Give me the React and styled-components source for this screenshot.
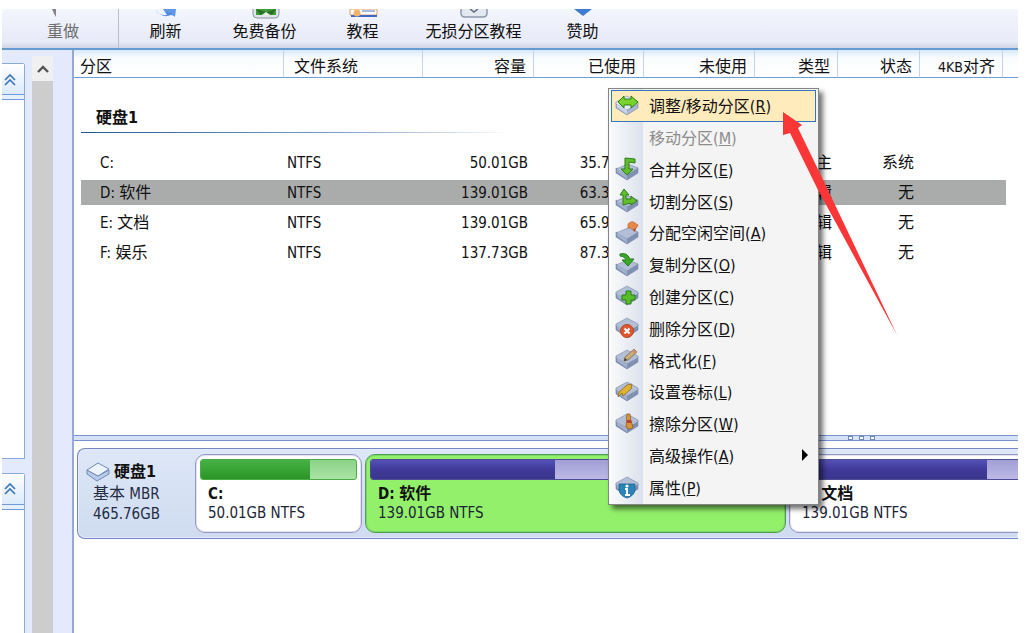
import React from "react";
import styled, { createGlobalStyle, css } from "styled-components";

const GlobalStyle = createGlobalStyle`
  *, *::before, *::after { box-sizing: border-box; }
  body {
    margin: 0;
    background: #fff;
    color: #111;
    font: 16px/20px "DejaVu Sans Condensed", "Noto Sans CJK SC", sans-serif;
  }
  button { font: inherit; color: inherit; border: 0; background: none; padding: 0; margin: 0; }
`;

const Window = styled.div`
  position: relative;
  display: flex;
  flex-direction: column;
  min-height: 100vh;
  padding: 9px 18px 0 2px;
  overflow: hidden;
`;

const Toolbar = styled.header`
  display: flex;
  height: 41px;
  padding-left: 6px;
  background: linear-gradient(#f4f6fd, #e7eaf7 85%, #cfd5e4);
  border-bottom: 2px solid #659bd3;
`;

const ToolButton = styled.button`
  display: flex;
  flex-direction: column;
  align-items: center;
  flex: none;
  gap: 3px;
  width: ${(p) => p.$width}px;
  white-space: nowrap;
  color: ${(p) => (p.disabled ? "#6d6d6d" : "#111")};
  ${(p) => p.$divided && css`
    border-right: 1px solid #b9bdcc;
  `}
`;

const ToolIcon = styled.svg`
  display: block;
  width: 30px;
  height: 10px;
`;

const Body = styled.div`
  display: flex;
  flex: 1;
`;

const Sidebar = styled.aside`
  display: flex;
  flex-direction: column;
  gap: 14px;
  width: 30px;
  padding: 13px 7px 0 0;
  background: #e2eafb;
`;

const SidePanel = styled.section`
  display: flex;
  flex-direction: column;
  flex: ${(p) => p.$share} 1 0;
  border: 1px solid #8aa9dc;
  border-left: 0;
  border-bottom-width: ${(p) => (p.$last ? 0 : 1)}px;
  border-top-right-radius: 3px;
  background: #fff;
`;

const PanelToggle = styled.button`
  display: flex;
  align-items: center;
  height: 36px;
  padding: 0 0 4px 1px;
  border-bottom: 1px solid #6f9ad8;
  background: linear-gradient(#fff, #dbeafa 30px, #6f9ad8 30px, #6f9ad8 31px, #e6f0fc 31px);
`;

const ScrollBar = styled.div`
  display: flex;
  flex-direction: column;
  width: 21px;
  padding-top: 6px;
  background: linear-gradient(#e2eafb 6px, #f0f0f0 6px);
`;

const ScrollUp = styled.button`
  display: grid;
  place-items: center;
  height: 25px;
`;

const ScrollThumb = styled.div`
  flex: 1;
  background: #cdcdcd;
`;

const Gutter = styled.div`
  width: 21px;
  background: #e4e9fd;
  border-right: 2px solid #96a9d6;
`;

const Main = styled.main`
  display: flex;
  flex-direction: column;
  flex: 1;
  min-width: 0;
`;

const TableArea = styled.section`
  flex: 385 1 0;
  overflow: hidden;
`;

const Table = styled.table`
  width: 100%;
  table-layout: fixed;
  border-spacing: 0;
  white-space: nowrap;
`;

const Latin = styled.span`
  font-size: 15px;
`;

const HeadCell = styled.th`
  height: 28px;
  padding: 6px 7px 0 ${(p) => p.$indent || 0}px;
  font-weight: 400;
  text-align: ${(p) => (p.$start ? "left" : "right")};
  background: linear-gradient(#d9e8fa, #fafcff 8px, #fff);
  border-right: ${(p) => (p.$last ? 0 : 1)}px solid #c3d3f0;
  border-bottom: 1px solid #6d9ddb;

  ${Latin} { font-size: 14px; }
`;

const GroupCell = styled.th`
  padding: 30px 0 15px 7px;
  text-align: left;
`;

const GroupTitle = styled.div`
  width: 430px;
  height: 25px;
  padding-left: 15px;
  border-bottom: 1px solid;
  border-image: linear-gradient(90deg, #1f56a0, #7f9fca 60%, #fff) 1;
`;

const Row = styled.tr`
  --fill: ${(p) => (p.$selected ? "#aaacab" : "transparent")};
`;

const Cell = styled.td`
  height: 30px;
  padding: 0 6px 0 ${(p) => p.$indent || 0}px;
  text-align: ${(p) => (p.$start ? "left" : "right")};
  background: var(--fill);
  background-clip: padding-box;
  border: solid transparent;
  border-width: 2px ${(p) => (p.$last ? 12 : 0)}px 3px ${(p) => (p.$first ? 7 : 0)}px;
`;

const Splitter = styled.div`
  display: flex;
  justify-content: center;
  align-items: center;
  gap: 6px;
  height: 6px;
  padding-left: 630px;
  border: solid #7895cf;
  border-width: 1px 0;
  background: #d5e2f8;
`;

const Grip = styled.i`
  width: 5px;
  height: 4px;
  border: 1px solid #6f87c2;
  background: #fff;
`;

const MapArea = styled.section`
  flex: 185 1 0;
  padding: 7px 0 0 3px;
  overflow: hidden;
`;

const DiskStrip = styled.div`
  display: flex;
  gap: 3px;
  height: 91px;
  padding: 5px 0;
  background: linear-gradient(#dde7f7, #cfdbf0);
  border: 1px solid #7385c2;
  border-right: 0;
  border-radius: 8px 0 0 8px;
  box-shadow: inset 0 0 0 1px #e4ecfb;
  overflow: hidden;
`;

const DiskInfo = styled.div`
  flex: none;
  width: 114px;
  padding: 8px 0 0 15px;
`;

const DiskName = styled.strong`
  display: flex;
  gap: 4px;
  height: 22px;
  margin-left: -7px;
`;

const DiskLine = styled.div`
  line-height: 20px;
  height: 20px;
  color: #242c44;
`;

const PartitionCard = styled.button`
  display: flex;
  flex-direction: column;
  flex: none;
  width: ${(p) => p.$width}px;
  padding: 4px;
  text-align: left;
  background: ${(p) => (p.$selected ? "#93f06a" : "#fff")};
  border: 1px solid ${(p) => (p.$selected ? "#4ea050" : "#9596c4")};
  border-radius: 10px;
  box-shadow: inset 0 0 0 1px ${(p) => (p.$selected ? "#7fd46c" : "#e3e3f2")};
`;

const barColours = {
  green: ["#46b246, #2b9426", "#8bd388, #a9e3a5", "#4bab49"],
  violet: ["#5451b6, #40399a 50%, #39388c", "#a19fd3, #bcb9e6", "#4d4d95"],
};

const UsageBar = styled.div`
  width: 100%;
  height: 21px;
  border: 1px solid ${(p) => barColours[p.$tone][2]};
  border-radius: 3px;
  background: linear-gradient(${(p) => barColours[p.$tone][1]});
  overflow: hidden;
`;

const UsageFill = styled.div`
  height: 100%;
  background: linear-gradient(${(p) => barColours[p.$tone][0]});
`;

const CardText = styled.div`
  padding: 4px 0 0 8px;
  line-height: 19px;
  color: #1c2438;
  white-space: nowrap;

  strong { display: block; height: 19px; color: #111; }
`;

const Menu = styled.div`
  position: absolute;
  left: 608px;
  top: 88px;
  display: grid;
  grid-auto-rows: 1fr;
  width: 211px;
  height: 417px;
  padding: 1px 2px;
  border: 1px solid #858585;
  background: linear-gradient(90deg, #fbfbfc, #dbe2ec 34px, #f4f4f4 34px);
  box-shadow: 4px 4px 5px rgba(0, 0, 0, 0.55);
`;

const MenuItem = styled.button`
  display: flex;
  align-items: center;
  gap: 10px;
  padding: 0 8px 0 4px;
  text-align: left;
  white-space: nowrap;
  color: ${(p) => (p.disabled ? "#8c8c8c" : "#111")};
  ${(p) => p.$active && css`
    background: #ffebbc;
    box-shadow: inset 0 0 0 1px #2f78bd;
  `}

  > svg { flex: none; width: 24px; height: 24px; }
  > svg + span { flex: 1; padding-top: 3px; }
  > svg:last-child { width: 6px; height: 12px; }
`;

const Pointer = styled.svg`
  position: absolute;
  left: 780px;
  top: 108px;
  width: 120px;
  height: 230px;
  pointer-events: none;
`;

/* Han glyphs keep the 16px size, runs of other characters are set smaller. */
const Mixed = ({ text }) =>
  text.split(/([\u4e00-\u9fff]+)/).filter(Boolean).map((run, i) =>
    /[\u4e00-\u9fff]/.test(run) ? run : <Latin key={i}>{run}</Latin>
  );

const tools = [
  { label: "重做", width: 111, disabled: true, divided: true,
    art: <path d="M4 0Q6 5 8 8Q8 4 8 0Z" fill="#848484" /> },
  { label: "刷新", width: 93,
    art: <><path d="M4 0Q8 7 16 6L14 3L21 1L24 7L20 6Q11 10 4 0Z" fill="#4f8be0" /><path d="M12 0H25L24 8L20 4L14 3Z" fill="#5f97e6" /></> },
  { label: "免费备份", width: 105,
    art: <><path d="M3 -4V5Q3 9 7 9H25Q29 9 29 5V-4Z" fill="#dfe5ea" stroke="#8896a2" /><path d="M6 0H26V6H6Z" fill="#3f9d35" /><path d="M6 0L16 3L26 0L22 6L16 3L10 6Z" fill="#2b6e2c" /><path d="M12 6L16 3L20 6Z" fill="#e8f2e6" /></> },
  { label: "教程", width: 91,
    art: <><path d="M2 0H29V6H2Z" fill="#fff" stroke="#e0a25e" /><path d="M3 7H29" stroke="#3c68c8" strokeWidth="2" /><circle cx="9" cy="4" r="3.5" fill="#f1b26e" /><path d="M14 2H27" stroke="#4d79d2" /></> },
  { label: "无损分区教程", width: 131,
    art: <><path d="M2 -4V4Q2 8 6 8H24Q28 8 28 4V-4Z" fill="#e4e8f0" stroke="#8d97ab" strokeWidth="1.5" /><path d="M11 0L15 3L19 0" fill="none" stroke="#626c7e" strokeWidth="1.5" /></> },
  { label: "赞助", width: 87,
    art: <path d="M6 0H24L15 7Z" fill="#3f7dd0" /> },
];

const columns = [
  { label: "分区", width: 210, start: true, headIndent: 6, indent: 19 },
  { label: "文件系统", width: 139, start: true, headIndent: 10, indent: 3 },
  { label: "容量", width: 111 },
  { label: "已使用", width: 110 },
  { label: "未使用", width: 111 },
  { label: "类型", width: 83 },
  { label: "状态", width: 82 },
  { label: "4KB对齐", width: 83 },
  { label: "" },
];

const rows = [
  ["C:", "NTFS", "50.01GB", "35.71GB", "", "主", "系统", "", ""],
  ["D: 软件", "NTFS", "139.01GB", "63.32GB", "", "逻辑", "无", "", ""],
  ["E: 文档", "NTFS", "139.01GB", "65.93GB", "", "逻辑", "无", "", ""],
  ["F: 娱乐", "NTFS", "137.73GB", "87.31GB", "", "逻辑", "无", "", ""],
];

const partitions = [
  { name: "C:", info: "50.01GB NTFS", width: 167, used: 70, tone: "green" },
  { name: "D: 软件", info: "139.01GB NTFS", width: 421, used: 45, tone: "violet", selected: true },
  { name: "E: 文档", info: "139.01GB NTFS", width: 421, used: 47, tone: "violet" },
];

const Slab = ({ flat, pale }) => (
  <g stroke="#7787a6" strokeWidth="0.6" strokeLinejoin="round" transform={flat ? "translate(0 2)" : undefined}>
    <path d="M1 9V14L12 21L23 14V9L12 16Z" fill={pale ? "#a9b7cf" : "#7f90b3"} />
    <path d={flat ? "M1 10L13 5L23 9L12 16Z" : "M1 8L12 2L23 8V10L12 16L1 10Z"} fill={pale ? "#e6edf8" : "#b3bfd6"} />
    <path d="M2 10L12 16V20L2 13Z" fill={pale ? "#c9d5e8" : "#a2b0cb"} stroke="none" />
  </g>
);

const green = { fill: "#62bd2b", stroke: "#2c7d1b", strokeWidth: 1, strokeLinejoin: "round" };

const icons = {
  resize: <><Slab pale /><path d="M3 8L9 2V5H16V2L23 8L16 14V11H9V14Z" {...green} fill="#77d22b" /></>,
  merge: <><Slab flat /><path d="M10 1L20 2V6L14 5V12H18L12 18L6 12H10Z" {...green} /></>,
  split: <><Slab flat /><path d="M8 16V6H5L9 0L14 6H11V10H16V7L22 12L16 16V14Z" {...green} /></>,
  allocate: <><Slab flat /><path d="M13 3Q17 -1 20 2L23 4Q22 8 18 9L16 7L13 7Z" fill="#e68745" stroke="#b85d2c" strokeWidth=".6" /><path d="M18 9L21 7L20 11Z" fill="#a33f2c" /></>,
  copy: <><Slab flat /><path d="M5 1Q12 -1 15 6H19L13 13L7 7H11Q10 3 5 3Z" {...green} fill="#38a82d" /></>,
  create: <><Slab /><path d="M11 7H16V11H20V16H16V20H11V16H7V11H11Z" {...green} fill="#55bd25" /></>,
  remove: <><Slab /><circle cx="12" cy="15" r="6.5" fill="#dd5830" stroke="#b94222" /><path d="M9.5 12.5L14.5 17.5M14.5 12.5L9.5 17.5" stroke="#fff" strokeWidth="2" /></>,
  format: <><Slab /><path d="M9 13L10 9L19 1L22 4L13 12Z" fill="#c8ad76" stroke="#77684e" strokeWidth=".8" /><path d="M19 1L22 4L20 6L17 3Z" fill="#d68b6c" /><path d="M9 13L10 10L12 12Z" fill="#333" /></>,
  label: <><Slab /><path d="M3 17L4 12L12 5L17 4L16 9L8 16L7 13Z" fill="#e0b032" stroke="#8b691e" strokeWidth=".8" /></>,
  wipe: <><Slab /><path d="M12 2H15L16 9L18 15Q15 19 11 15Z" fill="#dc9335" stroke="#91561b" strokeWidth=".7" /><path d="M12 8L16 8L17 11L12 11Z" fill="#b5402b" /></>,
  info: <><Slab /><path d="M4 9H20V15Q19 21 12 23Q5 21 4 15Z" fill="#2c83b7" stroke="#1a628e" strokeWidth=".8" /><path d="M10 14H12V19M10 20H15" fill="none" stroke="#fff" strokeWidth="2" /><circle cx="12" cy="11" r="1.5" fill="#fff" /></>,
};

const menu = [
  { label: "调整/移动分区", hotkey: "R", icon: "resize", active: true },
  { label: "移动分区", hotkey: "M", disabled: true },
  { label: "合并分区", hotkey: "E", icon: "merge" },
  { label: "切割分区", hotkey: "S", icon: "split" },
  { label: "分配空闲空间", hotkey: "A", icon: "allocate" },
  { label: "复制分区", hotkey: "O", icon: "copy" },
  { label: "创建分区", hotkey: "C", icon: "create" },
  { label: "删除分区", hotkey: "D", icon: "remove" },
  { label: "格式化", hotkey: "F", icon: "format" },
  { label: "设置卷标", hotkey: "L", icon: "label" },
  { label: "擦除分区", hotkey: "W", icon: "wipe" },
  { label: "高级操作", hotkey: "A", submenu: true },
  { label: "属性", hotkey: "P", icon: "info" },
];

const Chevrons = () => (
  <svg width="14" height="14" viewBox="0 0 14 14" fill="none" stroke="#3f78b8" strokeWidth="1.7">
    <path d="M2 7L7 2L12 7M2 12L7 7L12 12" />
  </svg>
);

export default function App() {
  return (
    <Window>
      <GlobalStyle />
      <Toolbar>
        {tools.map((t) => (
          <ToolButton key={t.label} $width={t.width} $divided={t.divided} disabled={t.disabled}>
            <ToolIcon viewBox="0 0 30 10" aria-hidden="true">{t.art}</ToolIcon>
            {t.label}
          </ToolButton>
        ))}
      </Toolbar>
      <Body>
        <Sidebar>
          <SidePanel $share={396}>
            <PanelToggle aria-label="收起"><Chevrons /></PanelToggle>
          </SidePanel>
          <SidePanel $share={160} $last>
            <PanelToggle aria-label="收起"><Chevrons /></PanelToggle>
          </SidePanel>
        </Sidebar>
        <ScrollBar>
          <ScrollUp aria-label="向上滚动">
            <svg width="12" height="8" viewBox="0 0 12 8" fill="none" stroke="#555" strokeWidth="2.4"><path d="M1 7L6 2L11 7" /></svg>
          </ScrollUp>
          <ScrollThumb />
        </ScrollBar>
        <Gutter />
        <Main>
          <TableArea>
            <Table>
              <colgroup>
                {columns.map((c, i) => <col key={i} width={c.width} />)}
              </colgroup>
              <thead>
                <tr>
                  {columns.map((c, i) => (
                    <HeadCell key={i} $start={c.start} $indent={c.headIndent} $last={i === 8}>
                      <Mixed text={c.label} />
                    </HeadCell>
                  ))}
                </tr>
              </thead>
              <tbody>
                <tr>
                  <GroupCell colSpan={9}><GroupTitle>硬盘1</GroupTitle></GroupCell>
                </tr>
                {rows.map((r, n) => (
                  <Row key={r[0]} $selected={n === 1}>
                    {r.map((v, i) => (
                      <Cell key={i} $start={columns[i].start} $indent={columns[i].indent} $first={i === 0} $last={i === 8}>
                        <Mixed text={v} />
                      </Cell>
                    ))}
                  </Row>
                ))}
              </tbody>
            </Table>
          </TableArea>
          <Splitter><Grip /><Grip /><Grip /></Splitter>
          <MapArea>
            <DiskStrip>
              <DiskInfo>
                <DiskName>
                  <svg width="24" height="20" viewBox="0 0 24 20" stroke="#7289b5" strokeLinejoin="round">
                    <path d="M1 8V12L11 19L23 12V8L12 14Z" fill="#b9cbea" />
                    <path d="M1 8L12 1L23 7L12 14Z" fill="#edf3fd" />
                  </svg>
                  硬盘1
                </DiskName>
                <DiskLine><Mixed text="基本 MBR" /></DiskLine>
                <DiskLine><Mixed text="465.76GB" /></DiskLine>
              </DiskInfo>
              {partitions.map((p) => (
                <PartitionCard key={p.name} $width={p.width} $selected={p.selected}>
                  <UsageBar $tone={p.tone}>
                    <UsageFill $tone={p.tone} style={{ width: `${p.used}%` }} />
                  </UsageBar>
                  <CardText>
                    <strong><Mixed text={p.name} /></strong>
                    <Mixed text={p.info} />
                  </CardText>
                </PartitionCard>
              ))}
            </DiskStrip>
          </MapArea>
        </Main>
      </Body>
      <Menu role="menu">
        {menu.map((m) => (
          <MenuItem key={m.label} role="menuitem" disabled={m.disabled} $active={m.active}>
            <svg viewBox="0 0 24 24" aria-hidden="true">{icons[m.icon]}</svg>
            <span>{m.label}(<u>{m.hotkey}</u>)</span>
            {m.submenu && <svg viewBox="0 0 6 12" aria-hidden="true"><path d="M0 0L6 6L0 12Z" fill="#000" /></svg>}
          </MenuItem>
        ))}
      </Menu>
      <Pointer viewBox="0 0 120 230" aria-hidden="true">
        <path d="M3 4L22 17L18 20L48 82L117 227L38 82L10 25L3 27Z" fill="#fb3636" />
      </Pointer>
    </Window>
  );
}
